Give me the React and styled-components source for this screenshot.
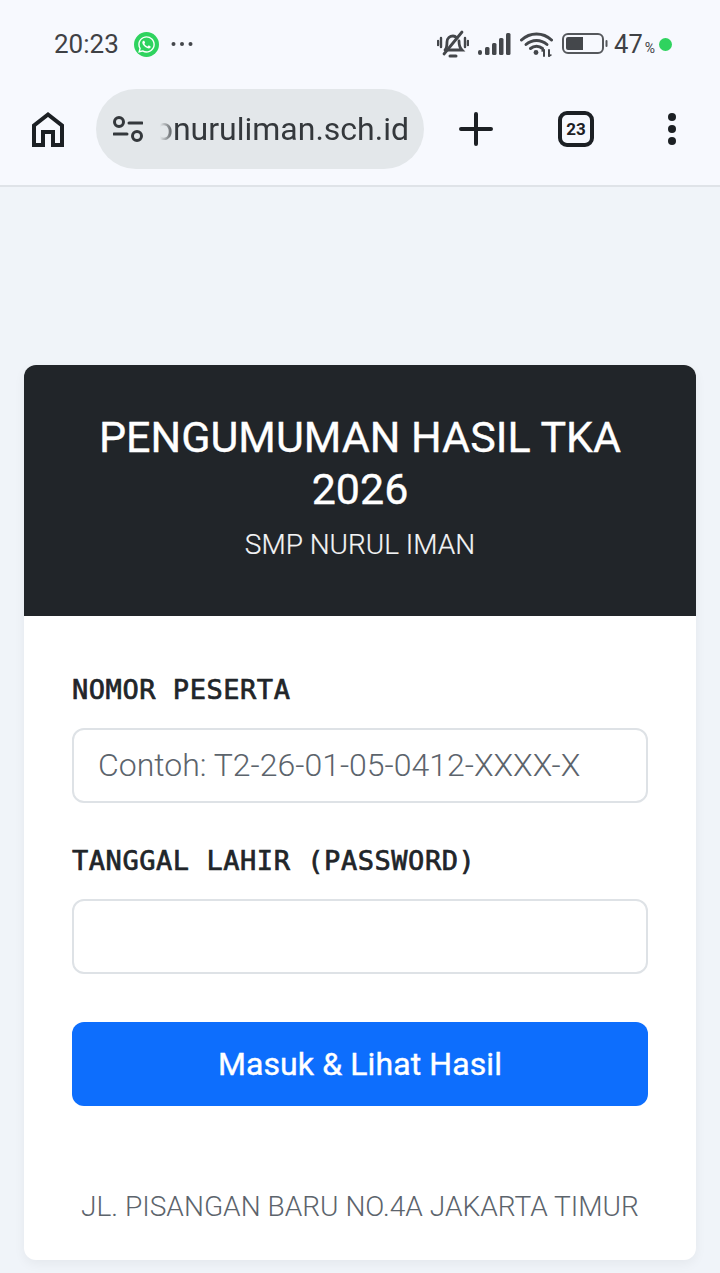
import React from "react";
import styled, { createGlobalStyle } from "styled-components";
import { FaWhatsapp } from "react-icons/fa";

const GlobalStyle = createGlobalStyle`
  html, body {
    margin: 0;
    padding: 0;
    background: #f0f4f9;
  }
  * {
    box-sizing: border-box;
  }
`;

const Page = styled.div`
  width: 720px;
  height: 1273px;
  overflow: hidden;
  display: flex;
  flex-direction: column;
  font-family: Roboto, "Liberation Sans", sans-serif;
`;

const BrowserTop = styled.header`
  height: 187px;
  flex-shrink: 0;
  background: #f7f9fe;
  border-bottom: 2px solid #dfe3e8;
`;

const StatusBar = styled.div`
  height: 88px;
  padding: 0 48px 0 54px;
  display: flex;
  align-items: center;
  justify-content: space-between;
  color: #3f4145;
`;

const StatusGroup = styled.div`
  display: flex;
  align-items: center;
  gap: ${(p) => p.$gap || 0}px;
`;

const Clock = styled.span`
  font-size: 26px;
  font-weight: 400;
  margin-right: 15px;
`;

const WhatsappBadge = styled.span`
  width: 25px;
  height: 25px;
  border-radius: 50%;
  background: #2fd35f;
  color: #fff;
  display: flex;
  align-items: center;
  justify-content: center;
  font-size: 19px;
  margin-right: 12px;
`;

const Battery = styled.span`
  font-size: 25.5px;
  margin-left: 6px;
`;

const Percent = styled.span`
  font-size: 14px;
  margin-left: 2px;
`;

const GreenDot = styled.span`
  width: 13px;
  height: 13px;
  border-radius: 50%;
  background: #2fd35f;
  margin-left: 4px;
`;

const Toolbar = styled.div`
  height: 97px;
  padding: 1px 0 0 30px;
  display: flex;
  align-items: flex-start;
`;

const IconSlot = styled.div`
  height: 80px;
  display: flex;
  align-items: center;
  justify-content: center;
  flex-shrink: 0;
  width: ${(p) => p.$w}px;
  margin-left: ${(p) => p.$ml || 0}px;
`;

const UrlPill = styled.div`
  width: 328px;
  height: 80px;
  margin-left: 30px;
  border-radius: 40px;
  background: #e3e7ea;
  display: flex;
  align-items: center;
  padding: 0 15px 0 17px;
  flex-shrink: 0;
`;

const UrlClip = styled.div`
  flex: 1;
  margin-left: 17px;
  min-width: 0;
  display: flex;
  justify-content: flex-end;
  overflow: hidden;
  -webkit-mask-image: linear-gradient(to right, transparent 0, #000 16px);
  mask-image: linear-gradient(to right, transparent 0, #000 16px);
`;

const UrlText = styled.span`
  font-size: 32px;
  color: #34383c;
  white-space: nowrap;
  line-height: 40px;
`;

const TabCount = styled.div`
  width: 36px;
  height: 36px;
  border: 4px solid #1c2024;
  border-radius: 9px;
  display: flex;
  align-items: center;
  justify-content: center;
  font-size: 17px;
  font-weight: 700;
  color: #1c2024;
`;

const Dots = styled.div`
  display: flex;
  flex-direction: column;
  gap: 4px;
`;

const Dot = styled.span`
  width: 8px;
  height: 8px;
  border-radius: 50%;
  background: #1c2024;
`;

const Content = styled.main`
  flex: 1;
  padding: 178px 24px 13px;
  display: flex;
`;

const Card = styled.section`
  width: 672px;
  height: 895px;
  background: #fff;
  border-radius: 12px;
  overflow: hidden;
  display: flex;
  flex-direction: column;
  box-shadow: 0 4px 12px rgba(0, 0, 0, 0.05);
`;

const CardHeader = styled.div`
  height: 251px;
  background: #212529;
  color: #fff;
  padding: 46px 48px 0;
  text-align: center;
`;

const Title = styled.h1`
  margin: 0;
  font-size: 43px;
  font-weight: 400;
  -webkit-text-stroke: 0.35px #fff;
  line-height: 52px;
`;

const Subtitle = styled.p`
  margin: 10px 0 0;
  font-size: 28px;
  line-height: 40px;
  font-weight: 300;
  -webkit-text-stroke: 0.2px #f3f4f5;
  color: #f3f4f5;
`;

const Form = styled.form`
  flex: 1;
  padding: 53px 48px 0;
  display: flex;
  flex-direction: column;
`;

const Label = styled.label`
  font-family: "DejaVu Sans Mono", monospace;
  font-size: 27px;
  font-weight: 400;
  -webkit-text-stroke: 0.7px #212529;
  letter-spacing: 0.55px;
  line-height: 42px;
  color: #212529;
  display: block;
  margin-bottom: 17px;
`;

const Input = styled.input`
  display: block;
  width: 100%;
  height: 75px;
  padding: 0 24px 2px;
  border: 2px solid #dee2e6;
  border-radius: 12px;
  background: #fff;
  font-family: Roboto, sans-serif;
  font-size: 32px;
  font-weight: 300;
  color: #212529;
  margin-bottom: 37px;
  outline: none;

  &::placeholder {
    color: #5c646c;
    opacity: 1;
  }
`;

const SubmitButton = styled.button`
  display: block;
  width: 100%;
  height: 84px;
  margin-top: 11px;
  border: 0;
  border-radius: 12px;
  background: #0d6efd;
  color: #fff;
  font-family: Roboto, sans-serif;
  font-size: 32px;
  font-weight: 400;
  -webkit-text-stroke: 0.4px #fff;
  letter-spacing: 0.1px;
`;

const Address = styled.p`
  margin: 81px 0 0;
  text-align: center;
  font-size: 28.1px;
  font-weight: 300;
  line-height: 40px;
  color: #5c646c;
  white-space: nowrap;
`;

const HomeIcon = () => (
  <svg width="34" height="36" viewBox="0 0 34 36" fill="none" stroke="#1c2024" strokeWidth="4">
    <path d="M3 34V14.5L17 3.5l14 11V34H22V21H12v13H3Z" />
  </svg>
);

const TuneIcon = () => (
  <svg width="30" height="26" viewBox="0 0 30 26" fill="none" stroke="#34383c" strokeWidth="3">
    <circle cx="6" cy="6" r="4.5" />
    <path d="M16 7h13" strokeLinecap="round" />
    <path d="M1 18h13" strokeLinecap="round" />
    <circle cx="24" cy="20" r="4.5" />
  </svg>
);

const PlusIcon = () => (
  <svg width="34" height="34" viewBox="0 0 34 34" stroke="#1c2024" strokeWidth="4" strokeLinecap="round">
    <path d="M17 2v30M2 17h30" />
  </svg>
);

const BellOffIcon = () => (
  <svg width="32" height="28" viewBox="0 0 32 28" fill="none" stroke="#44474b" strokeWidth="2.8" strokeLinecap="round">
    <path d="M8 20c2-2 2-4 2-8 0-4 3-6 6-6 2 0 3 1 4 2" />
    <path d="M22 11c0 4 1 7 3 9H11" />
    <path d="M13 26h6" strokeWidth="3" />
    <path d="M7 24L25 2" />
    <path d="M1 11v4M4 8v9M28 8v9M31 11v4" strokeWidth="2.4" />
  </svg>
);

const SignalIcon = () => (
  <svg width="33" height="22" viewBox="0 0 33 22" fill="#44474b">
    <rect x="0" y="17" width="4" height="5" rx="2" />
    <rect x="7" y="14" width="4.5" height="8" rx="1.5" />
    <rect x="14" y="10" width="4.5" height="12" rx="1.5" />
    <rect x="21" y="5" width="4.5" height="17" rx="1.5" />
    <rect x="28" y="0" width="4.5" height="22" rx="1.5" />
  </svg>
);

const WifiIcon = () => (
  <svg width="33" height="26" viewBox="0 0 33 26" fill="none" stroke="#44474b" strokeWidth="3" strokeLinecap="round">
    <path d="M1.5 9C10 1 23 1 31.5 9" />
    <path d="M6 13.5C12 8 21 8 27 13.5" />
    <path d="M10.5 17.5C14 14.5 19 14.5 22.5 17.5" />
    <circle cx="16" cy="21.5" r="2.4" fill="#44474b" stroke="none" />
    <path d="M24 19v6M29 19v6" strokeWidth="2" />
    <path d="M22 20l2-1M31 24l-2 1" strokeWidth="1.5" />
  </svg>
);

const BatteryIcon = () => (
  <svg width="46" height="22" viewBox="0 0 46 22">
    <rect x="1" y="1" width="40" height="19" rx="5" fill="none" stroke="#55585c" strokeWidth="2" />
    <path d="M4 6a2 2 0 0 1 2-2h15v13H6a2 2 0 0 1-2-2Z" fill="#44474b" />
    <rect x="43.5" y="7" width="2" height="7" rx="1" fill="#55585c" />
  </svg>
);

const MoreDots = () => (
  <svg width="22" height="6" viewBox="0 0 22 6" fill="#44474b">
    <circle cx="2.5" cy="3" r="2" />
    <circle cx="11" cy="3" r="2" />
    <circle cx="19.5" cy="3" r="2" />
  </svg>
);

const App = () => {
  return (
    <Page>
      <GlobalStyle />
      <BrowserTop>
        <StatusBar>
          <StatusGroup>
            <Clock>20:23</Clock>
            <WhatsappBadge>
              <FaWhatsapp />
            </WhatsappBadge>
            <MoreDots />
          </StatusGroup>
          <StatusGroup $gap={9}>
            <BellOffIcon />
            <SignalIcon />
            <WifiIcon />
            <StatusGroup>
              <BatteryIcon />
              <Battery>
                47<Percent>%</Percent>
              </Battery>
              <GreenDot />
            </StatusGroup>
          </StatusGroup>
        </StatusBar>
        <Toolbar>
          <IconSlot $w={36}>
            <HomeIcon />
          </IconSlot>
          <UrlPill>
            <TuneIcon />
            <UrlClip>
              <UrlText>onuruliman.sch.id</UrlText>
            </UrlClip>
          </UrlPill>
          <IconSlot $w={34} $ml={35}>
            <PlusIcon />
          </IconSlot>
          <IconSlot $w={36} $ml={65}>
            <TabCount>23</TabCount>
          </IconSlot>
          <IconSlot $w={8} $ml={74}>
            <Dots>
              <Dot />
              <Dot />
              <Dot />
            </Dots>
          </IconSlot>
        </Toolbar>
      </BrowserTop>
      <Content>
        <Card>
          <CardHeader>
            <Title>PENGUMUMAN HASIL TKA 2026</Title>
            <Subtitle>SMP NURUL IMAN</Subtitle>
          </CardHeader>
          <Form>
            <Label>NOMOR PESERTA</Label>
            <Input placeholder="Contoh: T2-26-01-05-0412-XXXX-X" />
            <Label>TANGGAL LAHIR (PASSWORD)</Label>
            <Input />
            <SubmitButton type="button">Masuk &amp; Lihat Hasil</SubmitButton>
            <Address>JL. PISANGAN BARU NO.4A JAKARTA TIMUR</Address>
          </Form>
        </Card>
      </Content>
    </Page>
  );
};

export default App;
